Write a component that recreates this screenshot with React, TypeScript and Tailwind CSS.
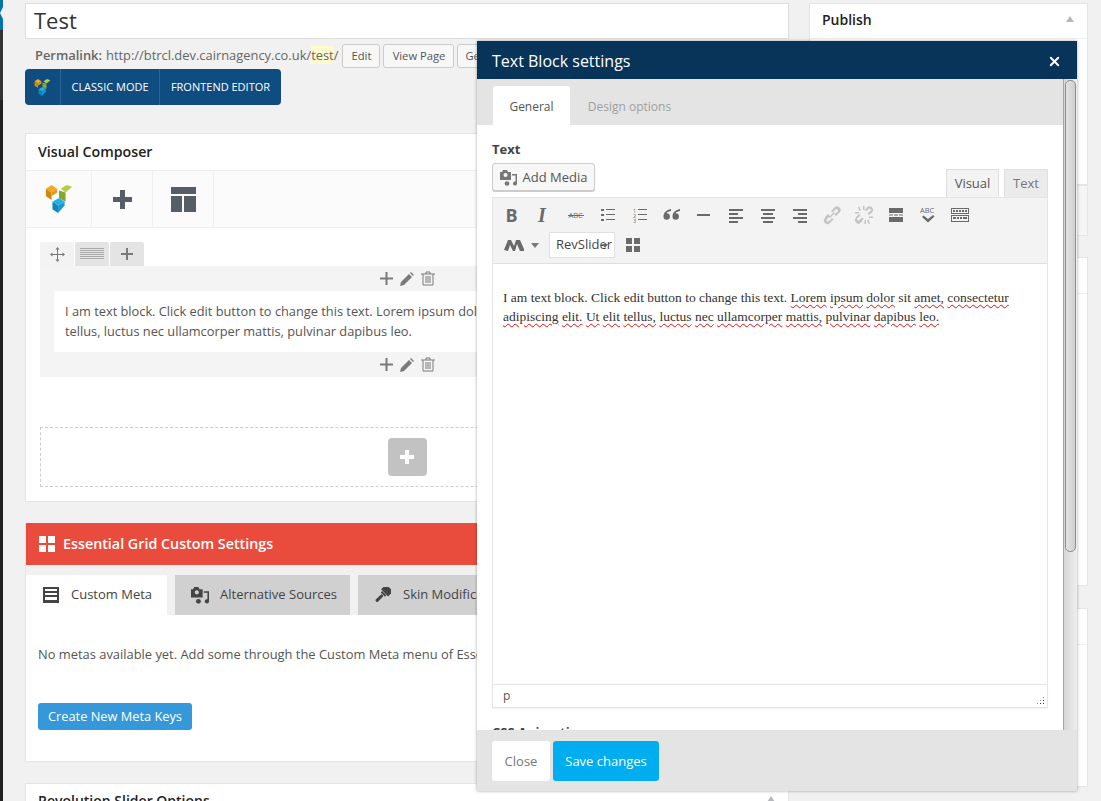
import React from "react";
import { X } from "lucide-react";

const openSans = "font-['Open_Sans',sans-serif]";

// Visual Composer logo, three folded blocks
function VcLogo({ size = 28 }: { size?: number }) {
  return (
    <svg width={size} height={size} viewBox="0 0 28 30">
      <polygon points="0,4 6,0 12,4 6,8" fill="#f5a623" />
      <polygon points="0,4 6,8 6,16 0,12" fill="#c98b12" />
      <polygon points="6,8 12,4 12,8 6,12" fill="#e09a17" />
      <polygon points="16,4 22,0 28,2 21,8" fill="#b5cf3f" />
      <polygon points="14,6 21,8 21,18 14,14" fill="#86a62e" />
      <polygon points="7,18 14,14 20,18 13,22" fill="#1fb0ea" />
      <polygon points="7,18 13,22 13,30 7,26" fill="#0f84ba" />
      <polygon points="13,22 20,18 20,22 13,30" fill="#1798d3" />
    </svg>
  );
}

function MediaIcon({ className = "" }: { className?: string }) {
  return (
    <svg viewBox="0 0 17 16" className={className} fill="currentColor">
      <path d="M0 2h2l1-2h4l1 2h3v8H0zM5.500 3a2 2 0 1 0 0 4 2 2 0 0 0 0-4z" fillRule="evenodd" />
      <path d="M12 4h5v9.500a2 2 0 1 1-1.500-1.900V5.500H12z" />
      <circle cx="7" cy="13.500" r="2.300" />
    </svg>
  );
}

function Pencil() {
  return (
    <svg width="14" height="14" viewBox="0 0 14 14" fill="#7a7a7a">
      <path d="M0 14l1-4 8-8 3 3-8 8zM10 1l1-1 3 3-1 1z" />
    </svg>
  );
}

function Trash() {
  return (
    <svg width="14" height="15" viewBox="0 0 14 15" fill="none" stroke="#7a7a7a" strokeWidth="1">
      <path d="M0 3h14M5 3V1h4v2M2 3v11h10V3M5 5v7M7 5v7M9 5v7" />
    </svg>
  );
}

function Plus({ size = 13, w = 2, color = "#7a7a7a" }: { size?: number; w?: number; color?: string }) {
  return (
    <svg width={size} height={size} viewBox={`0 0 ${size} ${size}`} stroke={color} strokeWidth={w}>
      <path d={`M${size / 2} 0V${size}M0 ${size / 2}H${size}`} />
    </svg>
  );
}

function RowActions() {
  return (
    <div className="flex items-center justify-center gap-[7px] h-[25px] w-full">
      <Plus />
      <Pencil />
      <Trash />
    </div>
  );
}

// tinymce toolbar glyphs, drawn on a 20x20 box
function ToolIcon({ children, muted }: { children: React.ReactNode; muted?: boolean }) {
  return (
    <span className="flex w-[32px] h-[30px] items-center justify-center">
      <svg width="20" height="20" viewBox="0 0 20 20" fill={muted ? "#c4c4c4" : "#6a6a6a"} stroke="none">
        {children}
      </svg>
    </span>
  );
}

function Toolbar() {
  const lines = (xs: number[][]) => xs.map((l, i) => <rect key={i} x={l[0]} y={l[1]} width={l[2]} height={l[3] ?? 2} />);
  return (
    <div className="bg-[#f3f3f3] border border-[#e5e5e5] border-b-[#dedede] h-[67px] pl-[3px] pt-[2px]">
      <div className="flex items-center h-[30px]">
        <ToolIcon><text x="3.500" y="16.500" fontSize="18" fontWeight="700" fontFamily="Open Sans">B</text></ToolIcon>
        <ToolIcon><text x="4" y="16.500" fontSize="20" fontWeight="700" fontStyle="italic" fontFamily="Liberation Serif">I</text></ToolIcon>
        <ToolIcon>
          <text x="2.500" y="13" fontSize="7.500" fontFamily="Open Sans">ABC</text>
          <rect x="2" y="10" width="16" height="1" />
        </ToolIcon>
        <ToolIcon>
          {lines([[3, 4, 3, 2], [3, 9, 3, 2], [3, 14, 3, 2], [8, 4, 9, 1], [8, 9, 9, 1], [8, 14, 9, 1]])}
        </ToolIcon>
        <ToolIcon>
          <text x="3" y="7.500" fontSize="5.500" fontFamily="Open Sans">1</text>
          <text x="3" y="12.500" fontSize="5.500" fontFamily="Open Sans">2</text>
          <text x="3" y="17.500" fontSize="5.500" fontFamily="Open Sans">3</text>
          {lines([[8, 4, 9, 1], [8, 9, 9, 1], [8, 14, 9, 1]])}
        </ToolIcon>
        <ToolIcon>
          <path d="M9 4C4 5 1.500 8 1.500 11.500a3.200 3.200 0 1 0 3.200-3.200c0-1 1.300-1.800 4.300-2.300zM18 4c-5 1-7.500 4-7.500 7.500a3.200 3.200 0 1 0 3.200-3.200c0-1 1.300-1.800 4.300-2.300z" />
        </ToolIcon>
        <ToolIcon>{lines([[3, 9, 13, 2]])}</ToolIcon>
        <ToolIcon>{lines([[3, 4, 14, 2], [3, 8, 9, 2], [3, 12, 14, 2], [3, 16, 9, 2]])}</ToolIcon>
        <ToolIcon>{lines([[3, 4, 14, 2], [5, 8, 10, 2], [3, 12, 14, 2], [5, 16, 10, 2]])}</ToolIcon>
        <ToolIcon>{lines([[3, 4, 14, 2], [8, 8, 9, 2], [3, 12, 14, 2], [8, 16, 9, 2]])}</ToolIcon>
        <ToolIcon muted>
          <path d="M3 12l3-3 2 2-3 3a1.400 1.400 0 0 0 2 2l3-3 1.500 1.500-3.500 3.500a3.500 3.500 0 0 1-5-5zM9 6l3.500-3.500a3.500 3.500 0 0 1 5 5L14 11l-1.500-1.500 3-3a1.400 1.400 0 0 0-2-2l-3 3zM7 12l5-5 1 1-5 5z" />
        </ToolIcon>
        <ToolIcon muted>
          <path d="M2 12l3-3 1.500 1.500-3 2.500a1.400 1.400 0 0 0 2 2l2.500-2.500L9.500 14 7 17.500a3.500 3.500 0 0 1-5-5zM11 5l2-2.500a3.500 3.500 0 0 1 5 5L15 10l-1.500-1.500 3-2.500a1.400 1.400 0 0 0-2-2l-2.500 2.500zM4 2l1.500-.5 1.500 4-1.500.5zM9 1h1.500v4H9zM1 7h4v1.500H1zM13 15l1.500-.5 1.500 4-1.500.5zM10.500 15H12v4h-1.500zM15 11.500h4V13h-4z" />
        </ToolIcon>
        <ToolIcon>{lines([[3, 3, 14, 5], [3, 9.500, 4, 1], [8, 9.500, 4, 1], [13, 9.500, 4, 1], [3, 12, 14, 5]])}</ToolIcon>
        <ToolIcon>
          <text x="2" y="8" fontSize="7.500" fontFamily="Open Sans">ABC</text>
          <path d="M4 12l1.500-1.500L10 14l5-4 1.500 1.500L10 17.500z" />
        </ToolIcon>
        <ToolIcon>
          <path d="M1 3h18v6H1zM2 4v4h16V4zM1 10h18v7H1zM2 11v5h16v-5zM3 5h2v2H3zM6 5h2v2H6zM9 5h2v2H9zM12 5h2v2h-2zM15 5h2v2h-2zM3 12h3v2H3zM7 12h2v2H7zM10 12h2v2h-2zM13 12h4v2h-4z" fillRule="evenodd" />
        </ToolIcon>
      </div>
      <div className="flex items-center h-[30px]">
        <span className="flex items-center w-[48px] pl-[8px] gap-[5px]">
          <svg width="22" height="12" viewBox="0 0 22 12" fill="#6a6a6a">
            <path d="M0 11L4 1h3l3 6 2-6h4l4 9v2h-4l-3-7-2 7H9L6 6l-2 6z" />
          </svg>
          <span className="w-0 h-0 border-x-[4px] border-x-transparent border-t-[5px] border-t-[#7a7a7a]" />
        </span>
        <span className="relative ml-[5px] flex items-center h-[26px] w-[66px] bg-white border border-[#e0e0e0] pl-[6px] text-[13px] text-[#444] overflow-hidden">
          RevSlider
          <span className="absolute right-[6px] top-[11px] w-0 h-0 border-x-[3px] border-x-transparent border-t-[4px] border-t-[#666]" />
        </span>
        <span className="ml-[11px] grid grid-cols-2 gap-[2px] w-[14px]">
          <i className="w-[6px] h-[6px] bg-[#6a6a6a]" />
          <i className="w-[6px] h-[6px] bg-[#6a6a6a]" />
          <i className="w-[6px] h-[6px] bg-[#6a6a6a]" />
          <i className="w-[6px] h-[6px] bg-[#6a6a6a]" />
        </span>
      </div>
    </div>
  );
}

// every misspelt word gets its own red squiggle
function Squiggle({ words }: { words: string }) {
  return (
    <>
      {words.split(" ").map((w, i) => (
        <React.Fragment key={i}>
          {i > 0 && " "}
          <span className="underline decoration-wavy decoration-[#e01010] decoration-1 underline-offset-2">{w}</span>
        </React.Fragment>
      ))}
    </>
  );
}

function SettingsModal() {
  return (
    <div className="absolute left-[477px] top-[41px] w-[600px] h-[750px] flex flex-col bg-white shadow-[0_0_3px_rgba(0,0,0,0.35)]">
      <div className="h-[38px] shrink-0 bg-[#08345a] flex items-center justify-between pt-[2px] pl-[15px] pr-[15px] text-white text-[16px]">
        <span>Text Block settings</span>
        <X size={15} strokeWidth={3} />
      </div>
      <div className="flex-1 min-h-0 flex">
        <div className="flex-1 min-w-0 flex flex-col overflow-hidden">
          <div className="h-[46px] shrink-0 bg-[#e4e4e4] flex items-end pl-[16px] text-[12px]">
            <span className="bg-white h-[39px] w-[77px] flex items-center justify-center pt-[3px] text-[#555] rounded-t-[3px]">General</span>
            <span className="h-[39px] w-[119px] flex items-center justify-center pt-[3px] text-[#a0a0a0]">Design options</span>
          </div>
          <div className="flex-1 min-h-0 overflow-hidden pl-[15px] pr-[15px] pt-[16px]">
            <div className="text-[13px] font-bold text-[#444] leading-[16px]">Text</div>
            <div className="flex items-end justify-between mt-[6px] h-[34px]">
              <button className="mb-[6px] h-[28px] w-[103px] flex items-center justify-center gap-[6px] pt-[1px] bg-[#f7f7f7] border border-[#ccc] rounded-[3px] text-[13px] text-[#555] shadow-[0_1px_0_#ccc]">
                <MediaIcon className="w-[17px] h-[16px] text-[#777]" />
                Add Media
              </button>
              <div className="flex items-end gap-[5px] text-[13px]">
                <span className="h-[28px] w-[53px] flex items-center justify-center bg-[#f3f3f3] border border-[#dedede] border-b-0 text-[#555]">Visual</span>
                <span className="h-[28px] w-[44px] flex items-center justify-center bg-[#ebebeb] border border-[#e0e0e0] border-b-0 text-[#777]">Text</span>
              </div>
            </div>
            <Toolbar />
            <div className="h-[420px] bg-white border-x border-[#e5e5e5] px-[10px] pt-[24px] font-['Liberation_Serif',serif] text-[13.500px] leading-[19px] text-[#333]">
              I am text block. Click edit button to change this text. <Squiggle words="Lorem ipsum dolor" /> sit <Squiggle words="amet, consectetur adipiscing elit. Ut elit tellus, luctus nec ullamcorper mattis, pulvinar dapibus leo." />
            </div>
            <div className="relative h-[24px] bg-white border border-[#e5e5e5] shadow-[0_1px_1px_rgba(0,0,0,0.05)] pl-[10px] text-[12px] leading-[22px] text-[#555]">
              p
              <span className="absolute right-[2px] bottom-[2px] w-[9px] h-[9px] bg-[radial-gradient(#333_1px,transparent_1px)] bg-[length:3px_3px] [clip-path:polygon(100%_0,100%_100%,0_100%)]" />
            </div>
            <div className="mt-[16px] text-[13px] font-bold text-[#444] leading-[16px]">CSS Animation</div>
          </div>
        </div>
        <div className="w-[14px] shrink-0 relative border-l border-[#a6a6a6] bg-[linear-gradient(90deg,#d6d6d6,#efefef)]">
          <div className="absolute left-[1px] right-[1px] top-[1px] h-[472px] rounded-[5px] border border-[#8f8f8f] bg-[linear-gradient(90deg,#e4e4e4,#cfcfcf)]" />
        </div>
      </div>
      <div className="h-[61px] shrink-0 bg-[#e4e4e4] flex items-center gap-[3px] pl-[15px] text-[13px]">
        <button className="w-[58px] h-[40px] bg-white rounded-[3px] text-[#777] pt-[2px]">Close</button>
        <button className="w-[106px] h-[40px] bg-[#00aeef] rounded-[3px] text-white pt-[2px]">Save changes</button>
      </div>
    </div>
  );
}

function SideCard({ className = "", title, head }: { className?: string; title?: string; head?: boolean }) {
  return (
    <div className={`border border-[#e5e5e5] ${className}`}>
      {title && (
        <div className="flex h-[35px] items-center justify-between pb-[4px] pl-[12px] pr-[13px] border-b border-[#eee] text-[14px] font-semibold text-[#222]">
          {title}
          <span className="w-0 h-0 border-x-[4px] border-x-transparent border-b-[6px] border-b-[#b4b9be]" />
        </div>
      )}
      {head && <div className="h-[36px] border-b border-[#eee]" />}
    </div>
  );
}

export default function App() {
  return (
    <div className={`relative w-[1101px] h-[801px] overflow-hidden bg-[#f1f1f1] ${openSans}`}>
      <div className="flex h-full">
        <div className="w-[3px] shrink-0 flex flex-col bg-[#222]">
          <div className="h-[30px] bg-[#0073aa] pt-[7px]">
            <div className="ml-auto w-0 h-0 border-y-[6px] border-y-transparent border-r-[3px] border-r-[#f1f1f1]" />
          </div>
          <div className="h-[70px] bg-[#333]" />
        </div>

        <div className="w-[764px] shrink-0 ml-[22px] pt-[3px]">
          <div className="h-[36px] bg-white border border-[#ddd] pl-[8px] text-[22px] leading-[33px] text-[#333]">Test</div>
          <div className="flex items-center h-[24px] pl-[10px] mt-[5px] text-[12.900px] text-[#666] whitespace-nowrap">
            <b className="font-semibold">Permalink:</b>
            <span className="ml-[4px]">http://btrcl.dev.cairnagency.co.uk/<span className="bg-[#fffbcc]">test</span>/</span>
            <span className="ml-[4px] h-[24px] w-[38px] flex items-center justify-center bg-[#f7f7f7] border border-[#ccc] rounded-[3px] text-[11.200px] text-[#555]">Edit</span>
            <span className="ml-[3px] h-[24px] w-[71px] flex items-center justify-center bg-[#f7f7f7] border border-[#ccc] rounded-[3px] text-[11.200px] text-[#555]">View Page</span>
            <span className="ml-[3px] h-[24px] w-[71px] pl-[7px] bg-[#f7f7f7] border border-[#ccc] rounded-[3px] text-[11.200px] leading-[22px] text-[#555]">Get Shortlink</span>
          </div>
          <div className="mt-[1px] flex w-[256px] h-[36px] bg-[#0f4c7f] rounded-[4px] text-white text-[11px] items-stretch">
            <span className="w-[36px] flex items-center justify-center border-r border-[#2a6496]"><VcLogo size={17} /></span>
            <span className="w-[99px] flex items-center justify-center border-r border-[#2a6496]">CLASSIC MODE</span>
            <span className="flex-1 flex items-center justify-center">FRONTEND EDITOR</span>
          </div>

          <div className="mt-[28px] bg-white border border-[#e5e5e5] h-[369px]">
            <div className="h-[37px] flex items-center pl-[12px] text-[14.200px] font-semibold text-[#222] border-b border-[#eee]">Visual Composer</div>
            <div className="h-[57px] flex bg-[#fbfbfb] border-b border-[#f0f0f0]">
              <span className="w-[66px] flex items-center justify-center border-r border-[#f0f0f0]"><VcLogo size={28} /></span>
              <span className="w-[61px] flex items-center justify-center border-r border-[#f0f0f0]">
                <Plus size={19} w={5} color="#555d66" />
              </span>
              <span className="w-[61px] flex items-center justify-center border-r border-[#f0f0f0]">
                <svg width="25" height="25" viewBox="0 0 25 25" fill="#555d66">
                  <rect width="25" height="7" />
                  <rect y="9" width="11" height="16" />
                  <rect x="13" y="9" width="12" height="16" />
                </svg>
              </span>
            </div>
            <div className="pl-[14px] pr-[14px] pt-[14px]">
              <div className="flex gap-px h-[24px]">
                <span className="w-[34px] bg-[#f3f3f3] rounded-t-[2px] flex items-center justify-center">
                  <svg width="15" height="15" viewBox="0 0 15 15" fill="#777">
                    <path d="M7 2h1v11H7zM2 7h11v1H2zM7.500 0l2 2.500h-4zM7.500 15l-2-2.500h4zM0 7.500l2.500-2v4zM15 7.500l-2.500 2v-4z" />
                  </svg>
                </span>
                <span className="w-[34px] bg-[#e4e4e4] rounded-t-[2px] flex items-center justify-center">
                  <span className="w-[24px] h-[12px] bg-[repeating-linear-gradient(180deg,#aaa_0,#aaa_1px,transparent_1px,transparent_2px)]" />
                </span>
                <span className="w-[34px] bg-[#e4e4e4] rounded-t-[2px] flex items-center justify-center"><Plus size={12} /></span>
              </div>
              <div className="bg-[#f4f4f4] px-[14px] h-[111px]">
                <RowActions />
                <div className="h-[61px] bg-white rounded-[2px] pl-[11px] pt-[10px] text-[12.800px] leading-[20px] text-[#555] whitespace-nowrap">
                  I am text block. Click edit button to change this text. Lorem ipsum dolor sit amet<br />
                  tellus, luctus nec ullamcorper mattis, pulvinar dapibus leo.
                </div>
                <RowActions />
              </div>
            </div>
            <div className="mx-[14px] mt-[50px] h-[60px] border border-dashed border-[#ccc] flex items-center justify-center">
              <span className="w-[39px] h-[38px] rounded-[4px] bg-[#c2c2c2] flex items-center justify-center">
                <Plus size={14} w={4} color="#fff" />
              </span>
            </div>
          </div>

          <div className="mt-[21px] bg-white h-[239px] border border-[#e5e5e5] border-t-0">
            <div className="h-[42px] bg-[#e94c3d] flex items-center pb-[1px] pl-[13px] gap-[8px] text-white text-[14.300px] font-semibold">
              <span className="grid grid-cols-2 gap-[2px]">
                <i className="w-[7px] h-[7px] bg-white" />
                <i className="w-[7px] h-[7px] bg-white" />
                <i className="w-[7px] h-[7px] bg-white" />
                <i className="w-[7px] h-[7px] bg-white" />
              </span>
              Essential Grid Custom Settings
            </div>
            <div className="h-[50px] bg-[#f1f1f1] pt-[10px] flex gap-[8px] text-[13px] text-[#444]">
              <span className="w-[141px] bg-white flex items-center pl-[17px] gap-[12px]">
                <svg width="16" height="16" viewBox="0 0 16 16" fill="#444">
                  <path d="M0 0h16v16H0zM2 2v2h12V2zM2 6v2h12V6zM2 10v3h12v-3z" fillRule="evenodd" />
                </svg>
                Custom Meta
              </span>
              <span className="w-[175px] bg-[#d0d0d0] flex items-center pl-[16px] gap-[11px]">
                <MediaIcon className="w-[18px] h-[17px] text-[#444]" />
                Alternative Sources
              </span>
              <span className="flex-1 bg-[#d0d0d0] flex items-center pl-[16px] gap-[12px]">
                <svg width="17" height="16" viewBox="0 0 16 16" fill="#444">
                  <g transform="rotate(45 8 8)">
                    <rect x="3" y="-2" width="10" height="7" />
                    <rect x="5" y="5.500" width="6" height="2" />
                    <rect x="6.500" y="8" width="3" height="9" rx="1" />
                  </g>
                </svg>
                Skin Modifications
              </span>
            </div>
            <div className="pl-[12px] pt-[30px] text-[12.900px] text-[#555] whitespace-nowrap">
              No metas available yet. Add some through the Custom Meta menu of Essential Grid.
            </div>
            <button className="block ml-[12px] mt-[39px] w-[154px] h-[27px] rounded-[3px] bg-[#3498db] text-white text-[12.800px]">Create New Meta Keys</button>
          </div>

          <div className="mt-[21px] bg-white border border-[#e5e5e5] h-[40px] flex items-start justify-between pl-[12px] pr-[13px] pt-[6px] text-[14px] font-semibold text-[#222]">
            Revolution Slider Options
            <span className="mt-[6px] w-0 h-0 border-x-[4px] border-x-transparent border-b-[6px] border-b-[#b4b9be]" />
          </div>
        </div>

        <div className="w-[279px] shrink-0 ml-[20px] pt-[3px] flex flex-col">
          <SideCard title="Publish" className="h-[182px] bg-white" />
          <SideCard className="h-[51px] bg-[#f5f5f5]" />
          <SideCard head className="mt-[21px] h-[329px] bg-white" />
          <SideCard head className="mt-[22px] h-[179px] bg-white" />
        </div>
      </div>

      <SettingsModal />
    </div>
  );
}
